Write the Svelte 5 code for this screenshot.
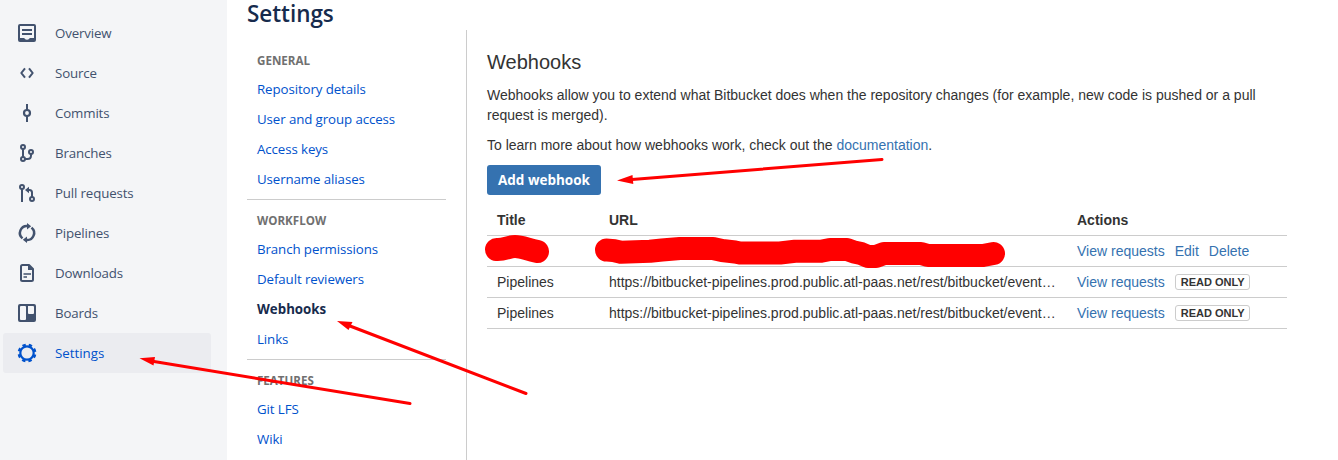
<script>
  const nav = [
    { id: 'overview', label: 'Overview' },
    { id: 'source', label: 'Source' },
    { id: 'commits', label: 'Commits' },
    { id: 'branches', label: 'Branches' },
    { id: 'pulls', label: 'Pull requests' },
    { id: 'pipelines', label: 'Pipelines' },
    { id: 'downloads', label: 'Downloads' },
    { id: 'boards', label: 'Boards' },
    { id: 'settings', label: 'Settings', active: true }
  ];
  const groups = [
    { title: 'GENERAL', items: ['Repository details', 'User and group access', 'Access keys', 'Username aliases'] },
    { title: 'WORKFLOW', items: ['Branch permissions', 'Default reviewers', 'Webhooks', 'Links'] },
    { title: 'FEATURES', items: ['Git LFS', 'Wiki'] }
  ];
  const url = 'https://bitbucket-pipelines.prod.public.atl-paas.net/rest/bitbucket/event…';
</script>

<div class="page">
  <nav class="sidebar">
    {#each nav as item}
      <div class="nav-item" class:active={item.active}>
        <svg width="24" height="24" viewBox="0 0 24 24" fill="none" stroke="currentColor" stroke-width="2">
          {#if item.id === 'overview'}
            <path d="M5 3h14a2 2 0 0 1 2 2v14a2 2 0 0 1-2 2H5a2 2 0 0 1-2-2V5a2 2 0 0 1 2-2zM5 5v12h4c.5 0 .8 1.700 3 1.700s2.500-1.700 3-1.700h4V5z" fill="currentColor" fill-rule="evenodd" stroke="none" />
            <path d="M7 9h10M7 13h10" />
          {:else if item.id === 'source'}
            <path d="M10 7.300L6.300 12l3.700 4.700M14 7.300l3.700 4.700-3.700 4.700" stroke-linejoin="round" />
          {:else if item.id === 'commits'}
            <circle cx="12" cy="12" r="3" stroke-width="2.200" />
            <path d="M12 3v6M12 15v6" />
          {:else if item.id === 'branches'}
            <circle cx="8" cy="6" r="2" />
            <circle cx="8" cy="18" r="2" />
            <circle cx="16" cy="11" r="2" />
            <path d="M8 8v8M16 13v1.500Q16 18 12.500 18H10" />
          {:else if item.id === 'pulls'}
            <circle cx="7" cy="6" r="2" />
            <circle cx="17" cy="18" r="2" />
            <path d="M7 8v13M17 16v-4.500Q17 9 14.500 9H12" />
            <path d="M10 9l4-3.300v6.600z" fill="currentColor" stroke="none" />
          {:else if item.id === 'pipelines'}
            <path d="M12.500 5A7 7 0 0 0 7.500 17.400M11.500 19A7 7 0 0 0 16.500 6.600" stroke-width="2.500" />
            <path d="M12 2l4.200 3.300L12 8.600zM12 22l-4.200-3.300L12 15.400z" fill="currentColor" stroke="none" />
          {:else if item.id === 'downloads'}
            <path d="M14 4H7.500Q6 4 6 5.500v13Q6 20 7.500 20h9q1.500 0 1.500-1.500V8z" stroke-linejoin="round" />
            <path d="M13 3.500V9H18.500z" fill="currentColor" stroke="none" />
            <path d="M8.500 13H16M8.500 16H12" stroke-width="1.700" />
          {:else if item.id === 'boards'}
            <path d="M5 3h14a2 2 0 0 1 2 2v14a2 2 0 0 1-2 2H5a2 2 0 0 1-2-2V5a2 2 0 0 1 2-2zM5 6v12a1 1 0 0 0 1 1h4a1 1 0 0 0 1-1V6a1 1 0 0 0-1-1H6a1 1 0 0 0-1 1zM13 5v7a1 1 0 0 0 1 1h4a1 1 0 0 0 1-1V6a1 1 0 0 0-1-1z" fill="currentColor" fill-rule="evenodd" stroke="none" />
          {:else}
            <circle cx="12" cy="12" r="6.700" stroke-width="2.200" />
            <circle cx="12" cy="12" r="8.200" stroke-width="2.400" stroke-dasharray="3.400 3.040" stroke-dashoffset="-1.520" />
          {/if}
        </svg>
        <span>{item.label}</span>
      </div>
    {/each}
  </nav>

  <main>
    <h1>Settings</h1>
    <div class="body">
      <aside>
        {#each groups as group}
          <section>
            <h2>{group.title}</h2>
            {#each group.items as label}
              <a class:current={label === 'Webhooks'}>{label}</a>
            {/each}
          </section>
        {/each}
      </aside>

      <div class="content">
        <h3>Webhooks</h3>
        <p>Webhooks allow you to extend what Bitbucket does when the repository changes (for example, new code is pushed or a pull<br />request is merged).</p>
        <p>To learn more about how webhooks work, check out the <span class="link">documentation</span>.</p>
        <button>Add webhook</button>
        <div class="table">
          <div class="row head"><span>Title</span><span>URL</span><span>Actions</span></div>
          <div class="row">
            <span></span><span></span>
            <span class="actions"><span class="link">View requests</span><span class="link">Edit</span><span class="link">Delete</span></span>
          </div>
          {#each [1, 2] as n (n)}
            <div class="row">
              <span>Pipelines</span><span>{url}</span>
              <span class="actions"><span class="link">View requests</span><span class="badge">READ ONLY</span></span>
            </div>
          {/each}
        </div>
      </div>
    </div>
  </main>

  <svg class="marks" width="1338" height="460" viewBox="0 0 1338 460" fill="none" stroke="#f00" stroke-linecap="round" stroke-linejoin="round">
    <g stroke-width="23">
      <path d="M496.500 249.500C505 250 508 246.500 515 246.500S526 249 537.500 251.500" />
      <path d="M606.500 250Q614 250 621 252.300L650 251.200 662 250 680 248.500H713L722 250.500 735 252 740 253H780L795 251.300H821L830 249.500H847L854 252 861 253.500 868 256.500H876L884 253.500H921L928 255.500H983L993.500 253.500" />
    </g>
    <g stroke-width="3">
      <path d="M410 403.500L154 361.500M526 393.500L350 326M882 159.500L632 179.500" />
    </g>
    <path d="M139.500 358.300L155 357 153.500 365.500zM337 321L352.500 322 348.500 330zM617 180.500L632.500 175 633.300 184z" fill="#f00" stroke="none" />
  </svg>
</div>

<style>
  :global(body) { background: #fff; overflow: hidden; }
  .page {
    position: relative;
    display: flex;
    width: 1338px;
    height: 460px;
    overflow: hidden;
    font-family: "Liberation Sans", Arial, sans-serif;
    font-size: 14px;
    line-height: 20px;
    color: #333;
  }
  .sidebar {
    box-sizing: border-box;
    flex: none;
    width: 227px;
    padding: 13px 16px 0 3px;
    background: #f4f5f7;
    font-family: "Open Sans", sans-serif;
    font-size: 13.3px;
    letter-spacing: -0.15px;
  }
  .nav-item {
    display: flex;
    align-items: center;
    gap: 16px;
    height: 40px;
    padding-left: 12px;
    border-radius: 3px;
    color: #42526e;
  }
  .nav-item.active { background: #ebecf0; color: #0052cc; letter-spacing: 0; }
  main { flex: 1; padding-left: 20px; }
  h1 {
    margin: 0;
    height: 30px;
    font: 600 22.5px/28px "Open Sans", sans-serif;
    letter-spacing: -0.05px;
    color: #172b4d;
  }
  .body { display: flex; height: 430px; }
  aside {
    flex: none;
    width: 199px;
    padding-right: 20px;
    border-right: 1px solid #ccc;
    font-family: "Open Sans", sans-serif;
    font-size: 13.3px;
    letter-spacing: -0.1px;
  }
  section {
    box-sizing: border-box;
    height: 160px;
    padding: 11px 0 0 10px;
    border-bottom: 1px solid #ccc;
  }
  section:first-child { height: 170px; padding-top: 21px; }
  h2 { margin: 0 0 8px; font: 700 11.6px/20px "Open Sans", sans-serif; color: #707070; letter-spacing: 0; }
  section a { display: block; height: 30px; color: #0052cc; }
  section a.current { font-weight: 700; color: #172b4d; letter-spacing: 0; }
  .content { width: 800px; padding: 20px 0 0 20px; }
  h3 { margin: 0 0 11px; font-weight: 400; font-size: 20px; line-height: 24px; }
  p { margin: 0 0 10px; white-space: nowrap; }
  .link { color: #3572b0; }
  button {
    display: block;
    width: 114px;
    height: 30px;
    padding: 0;
    border: 0;
    border-radius: 3px;
    background: #3572b0;
    color: #fff;
    font: 700 13.500px "Open Sans", sans-serif;
  }
  .table { margin-top: 10px; }
  .row {
    box-sizing: border-box;
    display: grid;
    grid-template-columns: 112px 468px 1fr;
    align-items: center;
    height: 31px;
    padding-left: 10px;
    border-bottom: 1px solid #ccc;
    white-space: nowrap;
  }
  .head { font-weight: 700; }
  .actions { display: flex; align-items: center; gap: 10px; }
  .badge {
    box-sizing: border-box;
    width: 75px;
    height: 16px;
    padding-left: 1px;
    border: 1px solid #ccc;
    border-radius: 3px;
    font: 700 11px/14px "Liberation Sans", Arial, sans-serif;
    text-align: center;
  }
  .marks { position: absolute; inset: 0; pointer-events: none; }
</style>
